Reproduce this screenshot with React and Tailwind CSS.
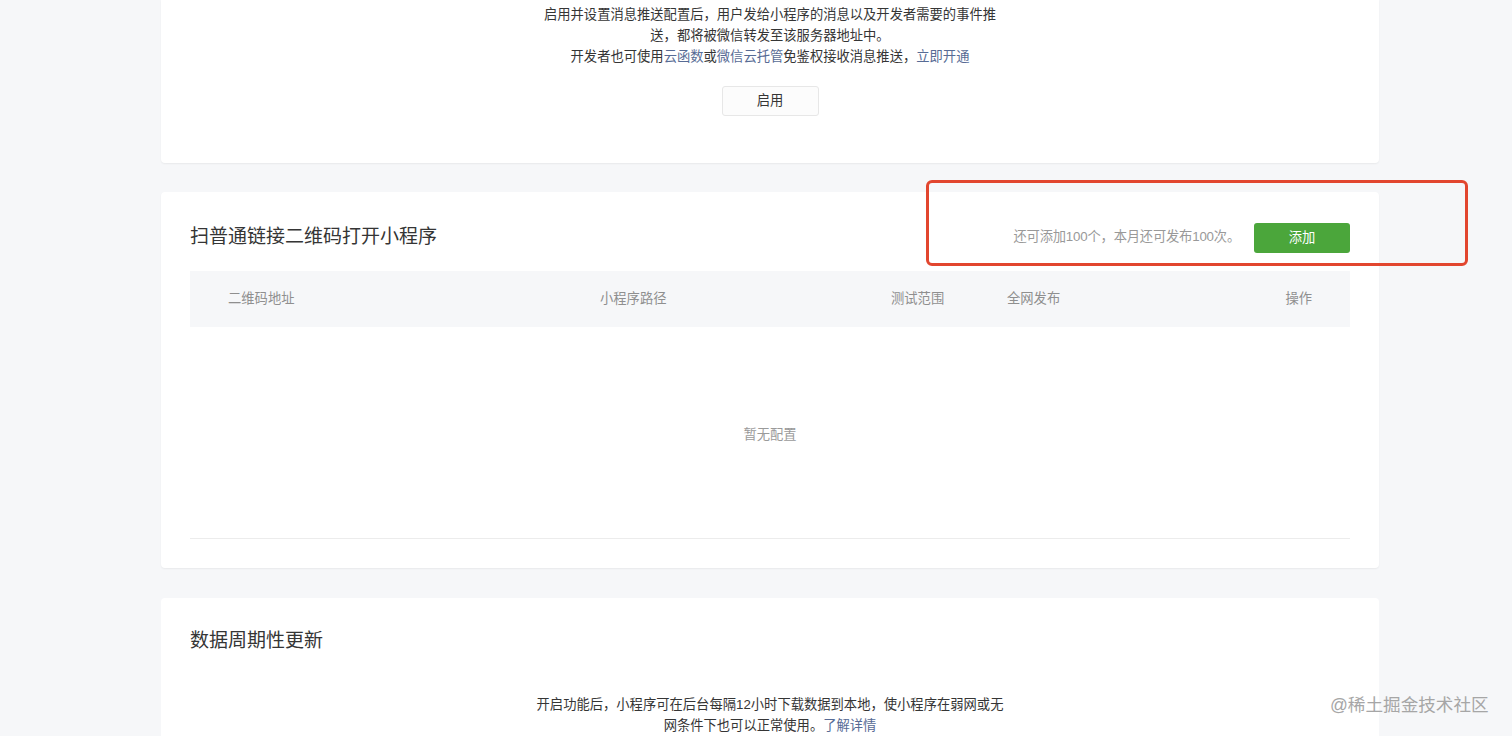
export default function App() {
  const font = { fontFamily: '"Liberation Sans", "Noto Sans CJK SC", sans-serif' };

  return (
    <div className="relative h-[736px] overflow-hidden bg-[#f6f7f9] text-[#353535]" style={font}>
      <div className="ml-[161px] w-[1218px]">
        {/* message push card (top cut off) */}
        <div className="rounded-b-[4px] bg-white pt-[4px] pb-[47px] shadow-[0_1px_2px_rgba(0,0,0,0.06)]">
          <div className="text-center text-[13.3px] leading-[21px]">
            <p>启用并设置消息推送配置后，用户发给小程序的消息以及开发者需要的事件推</p>
            <p>送，都将被微信转发至该服务器地址中。</p>
            <p>
              开发者也可使用<span className="text-[#576b95]">云函数</span>或
              <span className="text-[#576b95]">微信云托管</span>免鉴权接收消息推送，
              <span className="text-[#576b95]">立即开通</span>
            </p>
          </div>
          <div className="mt-[19px] flex justify-center">
            <button className="h-[30px] w-[97px] rounded-[3px] border border-[#e7e7e7] bg-[#fcfcfc] text-[13.3px] text-[#353535]">
              启用
            </button>
          </div>
        </div>

        {/* scan QR link card */}
        <div className="mt-[29px] rounded-[4px] bg-white px-[29px] pt-[30px] pb-[29px] shadow-[0_1px_2px_rgba(0,0,0,0.06)]">
          <div className="flex h-[30px] items-center justify-between">
            <h2 className="text-[19px] font-normal">扫普通链接二维码打开小程序</h2>
            <div className="flex items-center gap-[14px]">
              <span className="text-[13.3px] tracking-[-0.2px] text-[#999999]">还可添加100个，本月还可发布100次。</span>
              <button className="mt-[2px] h-[30px] w-[96px] rounded-[3px] bg-[#4ba63b] text-[13.3px] text-white">
                添加
              </button>
            </div>
          </div>
          <div className="mt-[19px] flex h-[56px] items-center bg-[#f6f7f9] pl-[38px] text-[13.3px] text-[#8f8f8f]">
            <div className="w-[372px]">二维码地址</div>
            <div className="w-[291px]">小程序路径</div>
            <div className="w-[116px]">测试范围</div>
            <div className="flex-1">全网发布</div>
            <div className="pr-[38px]">操作</div>
          </div>
          <div className="flex h-[212px] items-center justify-center border-b border-[#ececec] pt-[4px] text-[13.3px] text-[#9a9a9a]">
            暂无配置
          </div>
        </div>

        {/* periodic data update card */}
        <div className="mt-[30px] rounded-t-[4px] bg-white px-[29px] pt-[29px] pb-[40px]">
          <h2 className="h-[28px] text-[19px] leading-[28px] font-normal">数据周期性更新</h2>
          <div className="mt-[39px] text-center text-[13.3px] leading-[21px]">
            <p>开启功能后，小程序可在后台每隔12小时下载数据到本地，使小程序在弱网或无</p>
            <p>
              网条件下也可以正常使用。<span className="text-[#576b95]">了解详情</span>
            </p>
          </div>
        </div>
      </div>

      {/* annotation box */}
      <div className="pointer-events-none absolute top-[180px] left-[926px] h-[86px] w-[542px] rounded-[6px] border-[3px] border-[#e2462f]" />

      {/* watermark */}
      <div className="pointer-events-none absolute top-[693px] left-[1330px] text-[17.6px] leading-[24px] text-[#a6a6a6]">
        @稀土掘金技术社区
      </div>
    </div>
  );
}
